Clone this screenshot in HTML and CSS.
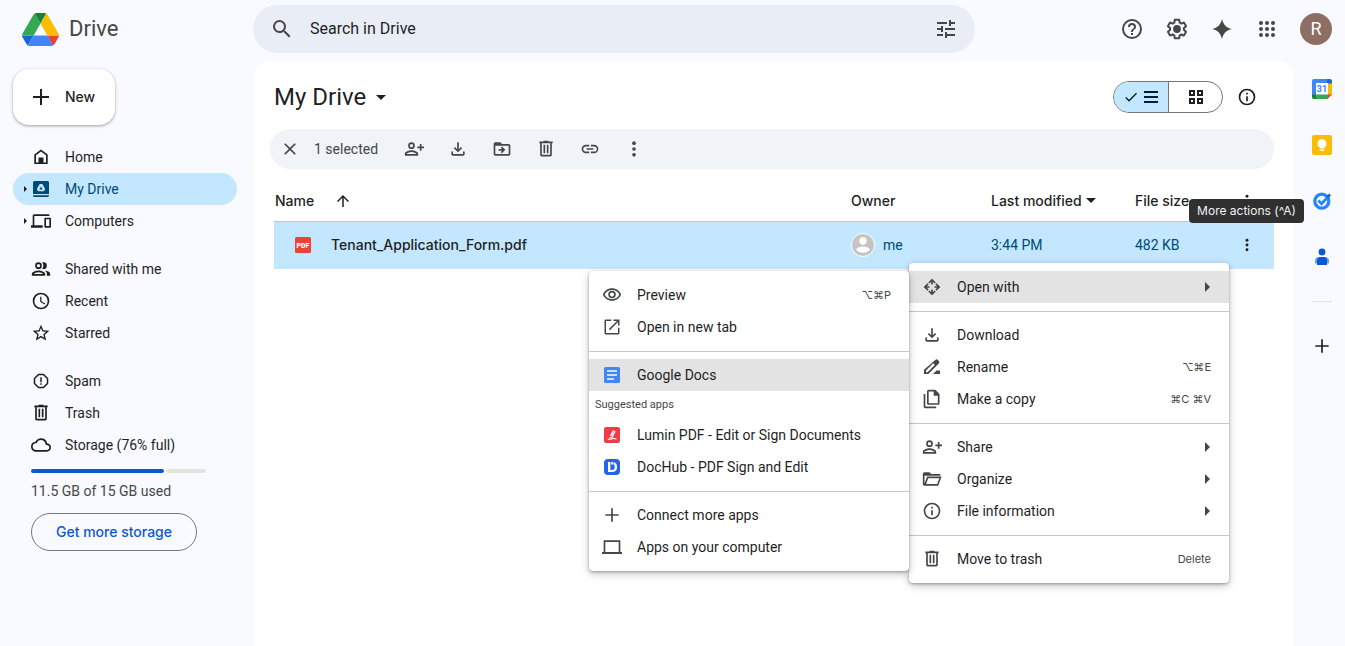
FILE: index.html
```html
<!DOCTYPE html>
<html lang="en">
<head>
<meta charset="utf-8">
<title>My Drive</title>
<link rel="stylesheet" href="styles.css">
</head>
<body>
<svg class="sprite" aria-hidden="true">
  <symbol id="search" viewBox="0 0 24 24"><path d="M15.5 14h-.79l-.28-.27A6.47 6.47 0 0 0 16 9.5 6.5 6.5 0 1 0 9.5 16c1.61 0 3.09-.59 4.23-1.57l.27.28v.79l5 4.99L20.49 19l-4.99-5zm-6 0a4.5 4.5 0 1 1 0-9 4.5 4.5 0 0 1 0 9z"/></symbol>
  <symbol id="tune" viewBox="0 0 24 24"><path d="M3 17v2h6v-2H3zM3 5v2h10V5H3zm10 16v-2h8v-2h-8v-2h-2v6h2zM7 9v2H3v2h4v2h2V9H7zm14 4v-2H11v2h10zm-6-4h2V7h4V5h-4V3h-2v6z"/></symbol>
  <symbol id="help" viewBox="0 0 24 24"><path d="M11 16h2v2h-2zm1-14a10 10 0 1 0 0 20 10 10 0 0 0 0-20zm0 18a8 8 0 1 1 0-16 8 8 0 0 1 0 16zm0-14a4 4 0 0 0-4 4h2a2 2 0 1 1 4 0c0 2-3 1.75-3 5h2c0-2.25 3-2.5 3-5a4 4 0 0 0-4-4z"/></symbol>
  <symbol id="gear" viewBox="0 0 24 24"><path d="M13.85 22.25h-3.7c-.74 0-1.36-.54-1.45-1.27l-.27-1.89c-.27-.14-.53-.29-.79-.46l-1.8.72c-.7.26-1.47-.03-1.81-.65L2.2 15.53c-.35-.66-.2-1.44.36-1.88l1.53-1.19c-.01-.15-.02-.3-.02-.46 0-.15.01-.31.02-.46l-1.52-1.19c-.59-.45-.74-1.26-.37-1.88l1.85-3.19c.34-.62 1.11-.9 1.79-.63l1.81.73c.26-.17.52-.32.78-.46l.27-1.91c.09-.7.71-1.25 1.44-1.25h3.7c.74 0 1.36.54 1.45 1.27l.27 1.89c.27.14.53.29.79.46l1.8-.72c.71-.26 1.48.03 1.82.65l1.84 3.18c.36.66.2 1.44-.36 1.88l-1.52 1.19c.01.15.02.3.02.46s-.01.31-.02.46l1.52 1.19c.56.45.72 1.23.37 1.86l-1.86 3.22c-.34.62-1.11.9-1.8.63l-1.8-.72c-.26.17-.52.32-.78.46l-.27 1.91c-.1.68-.72 1.22-1.46 1.22zm-3.23-2h2.76l.37-2.55.53-.22c.44-.18.88-.44 1.34-.78l.45-.34 2.38.96 1.38-2.4-2.03-1.58.07-.56c.03-.26.06-.51.06-.78s-.03-.53-.06-.78l-.07-.56 2.03-1.58-1.39-2.4-2.39.96-.45-.35c-.42-.32-.87-.58-1.33-.77l-.52-.22-.37-2.55h-2.76l-.37 2.55-.53.21c-.44.19-.88.44-1.34.79l-.45.33-2.38-.95-1.39 2.39 2.03 1.58-.07.56a7 7 0 0 0-.06.79c0 .26.02.53.06.78l.07.56-2.03 1.58 1.38 2.4 2.39-.96.45.35c.43.33.86.58 1.33.77l.53.22.38 2.55z"/><circle cx="12" cy="12" r="3.9"/></symbol>
  <symbol id="spark" viewBox="0 0 24 24"><path d="M12 2c1.300 5.800 4.200 8.700 10 10-5.800 1.300-8.700 4.200-10 10-1.300-5.800-4.200-8.700-10-10 5.800-1.300 8.700-4.200 10-10z"/></symbol>
  <symbol id="dots9" viewBox="0 0 24 24"><circle cx="6" cy="6" r="2"/><circle cx="12" cy="6" r="2"/><circle cx="18" cy="6" r="2"/><circle cx="6" cy="12" r="2"/><circle cx="12" cy="12" r="2"/><circle cx="18" cy="12" r="2"/><circle cx="6" cy="18" r="2"/><circle cx="12" cy="18" r="2"/><circle cx="18" cy="18" r="2"/></symbol>
  <symbol id="plus" viewBox="0 0 24 24"><path d="M20 13h-7v7h-2v-7H4v-2h7V4h2v7h7z"/></symbol>
  <symbol id="home" viewBox="0 0 20 20"><path d="M10 2.400 16.700 7.500V17.100H3.300V7.500zM5 8.300v7.100h10V8.300l-5-3.800z" fill-rule="evenodd"/><path d="M7.500 10.500h5v5.500h-5z"/></symbol>
  <symbol id="mydrive" viewBox="0 0 20 20"><path d="M3.500 2h13A1.500 1.500 0 0 1 18 3.500V15H2V3.500A1.500 1.500 0 0 1 3.500 2zM2 16.200h16v.3a1.500 1.500 0 0 1-1.500 1.500h-13A1.500 1.500 0 0 1 2 16.500z"/><path d="M8.700 5h2.600l2.900 5-1.300 2.300H7.100L5.800 10zM10 7.400l-1.700 3h3.400z" fill="#c2e7ff" fill-rule="evenodd"/></symbol>
  <symbol id="devices" viewBox="0 0 24 24"><path d="M4 6h18V4H4c-1.100 0-2 .9-2 2v11H0v3h14v-3H4V6zm19 2h-6c-.55 0-1 .45-1 1v10c0 .55.45 1 1 1h6c.55 0 1-.45 1-1V9c0-.55-.45-1-1-1zm-1 10h-4v-8h4v8z"/></symbol>
  <symbol id="people" viewBox="0 0 24 24"><path d="M9 13.750c-2.900 0-8 1.400-8 4.250v2h16v-2c0-2.850-5.100-4.250-8-4.250zM3.300 18c.9-1 3.200-2.150 5.700-2.150S13.800 17 14.700 18zM9 12a4 4 0 1 0 0-8 4 4 0 0 0 0 8zm0-6a2 2 0 1 1 0 4 2 2 0 0 1 0-4zm7.500 7.900c1.500 1 2.500 2.300 2.500 4.100v2h4v-2c0-2.300-3.500-3.700-6.500-4.100zM15 12a4 4 0 1 0 0-8c-.6 0-1.100.1-1.600.3a6 6 0 0 1 0 7.400c.5.200 1 .3 1.600.3z"/></symbol>
  <symbol id="clock" viewBox="0 0 24 24"><path d="M12 2a10 10 0 1 0 0 20 10 10 0 0 0 0-20zm0 18a8 8 0 1 1 0-16 8 8 0 0 1 0 16zm.5-13H11v6l5.250 3.150.75-1.230-4.500-2.670z"/></symbol>
  <symbol id="star" viewBox="0 0 24 24"><path d="M22 9.240l-7.190-.62L12 2 9.190 8.630 2 9.240l5.460 4.730L5.820 21 12 17.270 18.180 21l-1.630-7.030L22 9.240zM12 15.400l-3.760 2.270 1-4.280-3.320-2.880 4.380-.38L12 6.100l1.710 4.040 4.380.38-3.320 2.880 1 4.280L12 15.400z"/></symbol>
  <symbol id="spam" viewBox="0 0 24 24"><path d="M8.700 3.300h6.600l5.400 5.400v6.600l-5.400 5.400H8.700l-5.400-5.400V8.700z" fill="none" stroke="currentColor" stroke-width="2" stroke-linejoin="round"/><path d="M11 7h2v6.500h-2zM11 15h2v2h-2z"/></symbol>
  <symbol id="trash" viewBox="0 0 24 24"><path d="M15 3V2H9v1H4v2h1v14c0 1.100.9 2 2 2h10c1.100 0 2-.9 2-2V5h1V3zM7 5h10v14H7zM9 7h2v10H9zM13 7h2v10h-2z"/></symbol>
  <symbol id="cloud" viewBox="0 0 24 24"><path d="M19.350 10.040A7.490 7.490 0 0 0 12 4C9.110 4 6.600 5.640 5.350 8.040A5.994 5.994 0 0 0 0 14c0 3.310 2.690 6 6 6h13c2.760 0 5-2.240 5-5 0-2.640-2.050-4.780-4.650-4.960zM19 18H6c-2.210 0-4-1.790-4-4 0-2.050 1.530-3.760 3.560-3.970l1.070-.11.5-.95A5.469 5.469 0 0 1 12 6c2.620 0 4.880 1.860 5.390 4.430l.3 1.500 1.530.11A2.980 2.980 0 0 1 22 15c0 1.650-1.350 3-3 3z"/></symbol>
  <symbol id="close" viewBox="0 0 24 24"><path d="M19 6.410 17.590 5 12 10.590 6.410 5 5 6.410 10.590 12 5 17.590 6.410 19 12 13.410 17.590 19 19 17.590 13.410 12z"/></symbol>
  <symbol id="addperson" viewBox="0 0 24 24"><path d="M9 13.500c-2.900 0-8 1.400-8 4.250V20h16v-2.250c0-2.850-5.100-4.250-8-4.250zM3.100 18c.7-1 3.200-2.400 5.900-2.400s5.200 1.400 5.900 2.400zM9 12a4 4 0 1 0 0-8 4 4 0 0 0 0 8zm0-6a2 2 0 1 1 0 4 2 2 0 0 1 0-4zM19 9V6h2v3h3v2h-3v3h-2v-3h-3V9z"/></symbol>
  <symbol id="download" viewBox="0 0 24 24"><path d="M4 15h2v3h12v-3h2v3c0 1.100-.9 2-2 2H6c-1.100 0-2-.9-2-2zM17 11l-1.410-1.410L13 12.170V4h-2v8.170L8.410 9.590 7 11l5 5z"/></symbol>
  <symbol id="moveto" viewBox="0 0 24 24"><path d="M20 6h-8l-2-2H4c-1.100 0-2 .9-2 2v12c0 1.100.9 2 2 2h16c1.100 0 2-.9 2-2V8c0-1.100-.9-2-2-2zm0 12H4V8h16zM12.160 12H8v2h4.160l-1.590 1.590L11.990 17 16 13.010 11.990 9l-1.410 1.410z"/></symbol>
  <symbol id="link" viewBox="0 0 24 24"><path d="M3.900 12c0-1.710 1.390-3.100 3.100-3.100h4V7H7a5 5 0 0 0 0 10h4v-1.900H7c-1.710 0-3.100-1.390-3.100-3.100zM8 13h8v-2H8v2zm9-6h-4v1.900h4a3.100 3.100 0 0 1 0 6.200h-4V17h4a5 5 0 0 0 0-10z"/></symbol>
  <symbol id="more" viewBox="0 0 24 24"><circle cx="12" cy="5" r="2.200"/><circle cx="12" cy="12" r="2.200"/><circle cx="12" cy="19" r="2.200"/></symbol>
  <symbol id="up" viewBox="0 0 24 24"><path d="M4 12l1.410 1.410L11 7.830V20h2V7.830l5.580 5.590L20 12l-8-8z"/></symbol>
  <symbol id="check" viewBox="0 0 24 24"><path d="M9 16.170 4.830 12l-1.420 1.410L9 19 21 7l-1.410-1.410z"/></symbol>
  <symbol id="list" viewBox="0 0 18 18"><path d="M2 3h14v2H2zM2 8h14v2H2zM2 13h14v2H2z"/></symbol>
  <symbol id="grid" viewBox="0 0 18 18"><path d="M2 2h6v6H2zm2 2v2h2V4zM10 2h6v6h-6zm2 2v2h2V4zM2 10h6v6H2zm2 2v2h2v-2zM10 10h6v6h-6zm2 2v2h2v-2z" fill-rule="evenodd"/></symbol>
  <symbol id="info" viewBox="0 0 24 24"><path d="M11 7h2v2h-2zm0 4h2v6h-2zm1-9a10 10 0 1 0 0 20 10 10 0 0 0 0-20zm0 18a8 8 0 1 1 0-16 8 8 0 0 1 0 16z"/></symbol>
  <symbol id="eye" viewBox="0 0 24 24"><path d="M12 6a9.770 9.770 0 0 1 8.820 5.500 9.770 9.770 0 0 1-17.640 0A9.770 9.770 0 0 1 12 6m0-2C7 4 2.730 7.110 1 11.500 2.730 15.890 7 19 12 19s9.270-3.110 11-7.500C21.270 7.110 17 4 12 4zm0 5a2.500 2.500 0 1 1 0 5 2.500 2.500 0 0 1 0-5m0-2a4.500 4.500 0 1 0 0 9 4.500 4.500 0 0 0 0-9z"/></symbol>
  <symbol id="newtab" viewBox="0 0 24 24"><path d="M20 20H4V4h7V2H4c-1.110 0-2 .9-2 2v16c0 1.100.89 2 2 2h16c1.100 0 2-.9 2-2v-7h-2zM14 2v2h4.590L7.760 14.830l1.410 1.410L20 5.410V10h2V2z"/></symbol>
  <symbol id="laptop" viewBox="0 0 24 24"><path d="M22 18V4H2v14H0v2.500h24V18zM4 6h16v12H4z"/></symbol>
  <symbol id="openwith" viewBox="0 0 24 24"><path d="M12 2 7.500 6.500l1.400 1.400L11 5.800V9h2V5.800l2.100 2.100 1.400-1.400zM12 22l4.500-4.500-1.400-1.400-2.100 2.100V15h-2v3.200l-2.100-2.100-1.400 1.400zM2 12l4.500 4.500 1.400-1.400L5.800 13H9v-2H5.800l2.100-2.100-1.400-1.400zM22 12l-4.500-4.500-1.400 1.400 2.100 2.100H15v2h3.200l-2.100 2.100 1.400 1.400z"/></symbol>
  <symbol id="rename" viewBox="0 0 20 20"><path d="M13.300 3a1.800 1.800 0 0 1 2.600 0l.9.900a1.800 1.800 0 0 1 0 2.600L6.300 17H2v-4.300zM4 15.200h1.500l7.300-7.300-1.600-1.600L4 13.600zM14.500 13.500H18V17h-7z" fill-rule="evenodd"/></symbol>
  <symbol id="copy" viewBox="0 0 24 24"><path d="M16 1H8C6.900 1 6 1.900 6 3v14c0 1.100.9 2 2 2h11c1.100 0 2-.9 2-2V6zM8 17V3h6v5h5v9zM2 6v15c0 1.100.9 2 2 2h13v-2H4V6z"/></symbol>
  <symbol id="folder" viewBox="0 0 24 24"><path d="M22 6H11L9 4H3c-1.100 0-2 .9-2 2v12c0 1.100.9 2 2 2h16.500l4-11H6.200L3 17.500V8h19zM7.500 11h13.300l-2.500 7H4.900z" fill-rule="evenodd"/></symbol>
  <symbol id="person" viewBox="0 0 24 24"><circle cx="12" cy="12" r="11.500" fill="#c4c4c4" stroke="#fff"/><circle cx="12" cy="8" r="3.700" fill="#fff"/><path d="M5 16.500c1.500-2 4-3 7-3s5.500 1 7 3c-1.500 2-4 3.300-7 3.300s-5.500-1.300-7-3.300z" fill="#fff"/></symbol>
  <symbol id="keep" viewBox="0 0 20 20"><rect width="20" height="20" rx="2" fill="#fbbc04"/><path fill="#fff" d="M10 4.300a4.400 4.400 0 0 0-2.300 8.200v1h4.600v-1A4.400 4.400 0 0 0 10 4.300zM7.700 14.400h4.600v1.500H7.700z"/></symbol>
  <symbol id="tasks" viewBox="0 0 20 20"><circle cx="9.800" cy="10.200" r="7" fill="none" stroke="#2684fc" stroke-width="3.200"/><path d="m6.300 9.500 3.300 3.300 7.400-8" fill="none" stroke="#2684fc" stroke-width="2.800"/><path d="m14.500 5.500 2.700-3 1.800 1.800-2.800 3z" fill="#0d62d6"/></symbol>
  <symbol id="contacts" viewBox="0 0 20 20"><circle cx="10" cy="5" r="3.400" fill="#0b57d0"/><path fill="#669df6" d="M7 10h6a4 4 0 0 1 4 4v2.500H3V14a4 4 0 0 1 4-4z"/><path fill="#0b57d0" d="M9 10h2a4 4 0 0 1 4 4v4H5v-4a4 4 0 0 1 4-4z"/></symbol>
</svg>

<header class="topbar">
  <a class="brand" href="#">
    <svg class="brand-logo" viewBox="0 0 87.3 78" aria-hidden="true">
      <path d="m6.600 66.850 3.850 6.650c.8 1.400 1.950 2.500 3.300 3.300l13.750-23.800h-27.500c0 1.550.4 3.100 1.200 4.500z" fill="#1967d2"/>
      <path d="m43.650 25-13.750-23.800c-1.350.8-2.500 1.900-3.300 3.300l-25.400 44a9.060 9.060 0 0 0-1.200 4.500h27.500z" fill="#34a853"/>
      <path d="m73.550 76.800c1.350-.8 2.500-1.900 3.300-3.300l1.600-2.750 7.650-13.250c.8-1.400 1.200-2.950 1.200-4.500h-27.500l5.850 11.500z" fill="#ea4335"/>
      <path d="m43.650 25 13.750-23.800c-1.350-.8-2.900-1.200-4.500-1.200h-18.500c-1.600 0-3.150.45-4.500 1.200z" fill="#188038"/>
      <path d="m59.800 53h-32.300l-13.750 23.800c1.350.8 2.900 1.200 4.500 1.200h50.800c1.600 0 3.150-.45 4.500-1.200z" fill="#4285f4"/>
      <path d="m73.400 26.500-12.700-22c-.8-1.400-1.950-2.500-3.300-3.300l-13.750 23.800 16.150 28h27.450c0-1.550-.4-3.100-1.200-4.500z" fill="#fbbc04"/>
    </svg>
    <span>Drive</span>
  </a>
  <form class="search" role="search">
    <button class="icon-btn" type="button" aria-label="Search"><svg class="i24"><use href="#search"/></svg></button>
    <input class="search-input" type="text" placeholder="Search in Drive" aria-label="Search in Drive">
    <button class="icon-btn" type="button" aria-label="Advanced search"><svg class="i24"><use href="#tune"/></svg></button>
  </form>
  <div class="top-actions">
    <button class="icon-btn" aria-label="Support"><svg class="i24"><use href="#help"/></svg></button>
    <button class="icon-btn" aria-label="Settings"><svg class="i24"><use href="#gear"/></svg></button>
    <button class="icon-btn" aria-label="Ask Gemini"><svg class="i24"><use href="#spark"/></svg></button>
    <button class="icon-btn" aria-label="Google apps"><svg class="i24"><use href="#dots9"/></svg></button>
    <button class="avatar" aria-label="Account">R</button>
  </div>
</header>

<div class="body">
  <aside class="sidebar">
    <button class="new-btn"><svg class="i24"><use href="#plus"/></svg>New</button>
    <nav class="nav">
      <div class="nav-group">
        <a class="nav-item" href="#"><svg class="i20"><use href="#home"/></svg>Home</a>
        <a class="nav-item expandable selected" href="#"><svg class="i20"><use href="#mydrive"/></svg>My Drive</a>
        <a class="nav-item expandable" href="#"><svg class="i20"><use href="#devices"/></svg>Computers</a>
      </div>
      <div class="nav-group">
        <a class="nav-item" href="#"><svg class="i20"><use href="#people"/></svg>Shared with me</a>
        <a class="nav-item" href="#"><svg class="i20"><use href="#clock"/></svg>Recent</a>
        <a class="nav-item" href="#"><svg class="i20"><use href="#star"/></svg>Starred</a>
      </div>
      <div class="nav-group">
        <a class="nav-item" href="#"><svg class="i20 small"><use href="#spam"/></svg>Spam</a>
        <a class="nav-item" href="#"><svg class="i20"><use href="#trash"/></svg>Trash</a>
        <a class="nav-item" href="#"><svg class="i20"><use href="#cloud"/></svg>Storage (76% full)</a>
      </div>
    </nav>
    <div class="storage">
      <div class="meter"><span class="meter-used" style="width:76%"></span><span class="meter-free"></span></div>
      <p class="storage-text">11.5 GB of 15 GB used</p>
      <button class="storage-btn">Get more storage</button>
    </div>
  </aside>

  <main class="content">
    <div class="title-row">
      <button class="title">My Drive<span class="caret"></span></button>
      <div class="title-actions">
        <div class="view-switch">
          <button class="view on" aria-label="List layout"><svg class="i16"><use href="#check"/></svg><svg class="i18"><use href="#list"/></svg></button>
          <button class="view" aria-label="Grid layout"><svg class="i18"><use href="#grid"/></svg></button>
        </div>
        <button class="icon-btn dark" aria-label="View details"><svg class="i20"><use href="#info"/></svg></button>
      </div>
    </div>

    <div class="toolbar">
      <button class="tool" aria-label="Clear selection"><svg class="i20"><use href="#close"/></svg></button>
      <span class="count">1 selected</span>
      <button class="tool" aria-label="Share"><svg class="i20"><use href="#addperson"/></svg></button>
      <button class="tool" aria-label="Download"><svg class="i20"><use href="#download"/></svg></button>
      <button class="tool" aria-label="Move"><svg class="i20"><use href="#moveto"/></svg></button>
      <button class="tool" aria-label="Move to trash"><svg class="i20"><use href="#trash"/></svg></button>
      <button class="tool" aria-label="Copy link"><svg class="i20"><use href="#link"/></svg></button>
      <button class="tool" aria-label="More actions"><svg class="i20"><use href="#more"/></svg></button>
    </div>

    <table class="files">
      <thead>
        <tr>
          <th class="c-name"><span class="cell name-head">Name<svg class="i18"><use href="#up"/></svg></span></th>
          <th class="c-owner">Owner</th>
          <th class="c-date"><span class="cell">Last modified<span class="caret"></span></span></th>
          <th class="c-size">File size</th>
          <th class="c-more"><button class="more-btn" aria-label="More"><svg class="i16"><use href="#more"/></svg></button></th>
        </tr>
      </thead>
      <tbody>
        <tr>
          <td><span class="cell file-name"><svg class="pdf" viewBox="0 0 16 16" aria-hidden="true"><rect width="16" height="16" rx="1.500" fill="#ea4335"/><text x="8" y="10.500" text-anchor="middle">PDF</text></svg>Tenant_Application_Form.pdf</span></td>
          <td><span class="cell owner"><svg class="i24"><use href="#person"/></svg>me</span></td>
          <td>3:44 PM</td>
          <td>482 KB</td>
          <td class="c-more"><button class="more-btn" aria-label="More actions"><svg class="i16"><use href="#more"/></svg></button></td>
        </tr>
      </tbody>
    </table>

    <div class="tooltip" role="tooltip">More actions (^A)</div>

    <div class="menu context-menu" role="menu">
      <div class="menu-anchor">
        <button class="menu-item active" role="menuitem"><svg class="i20"><use href="#openwith"/></svg><span class="label">Open with</span><span class="arrow"></span></button>
        <div class="menu submenu" role="menu">
          <button class="menu-item" role="menuitem"><svg class="i20"><use href="#eye"/></svg><span class="label">Preview</span><kbd>⌥⌘P</kbd></button>
          <button class="menu-item" role="menuitem"><svg class="i20 small"><use href="#newtab"/></svg><span class="label">Open in new tab</span></button>
          <hr>
          <button class="menu-item active" role="menuitem"><svg class="app" viewBox="0 0 16 16"><rect width="16" height="16" rx="1.500" fill="#4285f4"/><path d="M3 4h10M3 8h10M3 12h7" stroke="#fff" stroke-width="1.600"/></svg><span class="label">Google Docs</span></button>
          <div class="menu-caption">Suggested apps</div>
          <button class="menu-item" role="menuitem"><svg class="app" viewBox="0 0 16 16"><rect width="16" height="16" rx="2" fill="#f23b48"/><path d="M9.800 3.400C8.500 5 7.300 7 6.600 9M11.300 4.300C10 5.800 8.800 8 8.200 10L5 11.500" fill="none" stroke="#fff" stroke-width="1.300"/><path d="M3.800 12.300h3c1.200 0 1.700-.9 2.700-.9.700 0 1 .7 3 .5" fill="none" stroke="#fff" stroke-width="1.100"/></svg><span class="label">Lumin PDF - Edit or Sign Documents</span></button>
          <button class="menu-item" role="menuitem"><svg class="app" viewBox="0 0 16 16"><rect width="16" height="16" rx="4" fill="#2563eb"/><path d="M4 3h2.400v7.900h1.400c2 0 2.900-1 2.900-3 0-1.300-.4-2.100-1.200-2.600V3c2.400.8 3.600 2.500 3.600 5 0 3.200-1.900 5-5.200 5H4z" fill="#fff"/><path d="M7.200 3c.8 0 1.300.1 1.700.2v2.200H7.200z" fill="#fff"/></svg><span class="label">DocHub - PDF Sign and Edit</span></button>
          <hr>
          <button class="menu-item" role="menuitem"><svg class="i20"><use href="#plus"/></svg><span class="label">Connect more apps</span></button>
          <button class="menu-item" role="menuitem"><svg class="i20"><use href="#laptop"/></svg><span class="label">Apps on your computer</span></button>
        </div>
      </div>
      <hr>
      <button class="menu-item" role="menuitem"><svg class="i20"><use href="#download"/></svg><span class="label">Download</span></button>
      <button class="menu-item" role="menuitem"><svg class="i20"><use href="#rename"/></svg><span class="label">Rename</span><kbd>⌥⌘E</kbd></button>
      <button class="menu-item" role="menuitem"><svg class="i20"><use href="#copy"/></svg><span class="label">Make a copy</span><kbd>⌘C ⌘V</kbd></button>
      <hr>
      <button class="menu-item" role="menuitem"><svg class="i20"><use href="#addperson"/></svg><span class="label">Share</span><span class="arrow"></span></button>
      <button class="menu-item" role="menuitem"><svg class="i20"><use href="#folder"/></svg><span class="label">Organize</span><span class="arrow"></span></button>
      <button class="menu-item" role="menuitem"><svg class="i20"><use href="#info"/></svg><span class="label">File information</span><span class="arrow"></span></button>
      <hr>
      <button class="menu-item" role="menuitem"><svg class="i20"><use href="#trash"/></svg><span class="label">Move to trash</span><kbd>Delete</kbd></button>
    </div>
  </main>

  <aside class="rail">
    <button class="rail-btn" aria-label="Calendar">
      <svg class="i20" viewBox="0 0 20 20"><path fill="#4285f4" d="M2 0h13v4H4v12H0V2a2 2 0 0 1 2-2z"/><path fill="#1967d2" d="M15 0h3a2 2 0 0 1 2 2v3h-5z"/><path fill="#fbbc04" d="M15.500 4.500H20V16h-4.500z"/><path fill="#fff" d="M4 4h12v12H4z"/><path fill="#188038" d="M0 15.500h4V20H2a2 2 0 0 1-2-2z"/><path fill="#34a853" d="M4 15.500h12V20H4z"/><path fill="#ea4335" d="M16 15.500h4L15.500 20z"/><text x="10" y="13" text-anchor="middle" class="cal-day">31</text></svg>
    </button>
    <button class="rail-btn" aria-label="Keep"><svg class="i20"><use href="#keep"/></svg></button>
    <button class="rail-btn" aria-label="Tasks"><svg class="i20"><use href="#tasks"/></svg></button>
    <button class="rail-btn" aria-label="Contacts"><svg class="i20"><use href="#contacts"/></svg></button>
    <div class="rail-line"></div>
    <button class="rail-btn dark" aria-label="Get add-ons"><svg class="i20"><use href="#plus"/></svg></button>
  </aside>
</div>
</body>
</html>
```
FILE: styles.css
```css
* { box-sizing: border-box; }

body {
  margin: 0;
  min-height: 100vh;
  display: flex;
  flex-direction: column;
  background: #f9faff;
  color: #1f1f1f;
  font: 14px/20px Roboto, "DejaVu Sans", sans-serif;
}

button, input {
  font: inherit;
  color: inherit;
  border: 0;
  padding: 0;
  background: none;
}

a { color: inherit; text-decoration: none; }
svg { display: block; flex: none; fill: currentColor; }

.sprite { position: absolute; width: 0; height: 0; }
.i16 { width: 16px; height: 16px; }
.i18 { width: 18px; height: 18px; }
.i20 { width: 20px; height: 20px; }
.i24 { width: 24px; height: 24px; }
.i20.small { padding: 1px; }
.cal-day { font: bold 9px Roboto, sans-serif; fill: #4285f4; }

.caret {
  border: 5px solid transparent;
  border-top-color: currentColor;
  border-bottom: 0;
}

.icon-btn {
  display: flex;
  align-items: center;
  justify-content: center;
  color: #444746;
}
.icon-btn.dark { color: #1f1f1f; }

/* Top bar */
.topbar { display: flex; align-items: center; padding: 5px 13px 8px 22px; }
.brand {
  display: flex;
  align-items: center;
  gap: 10px;
  width: 231px;
  font-size: 22px;
  line-height: 28px;
  color: #444746;
}
.brand-logo { width: 37px; height: 33px; }
.search {
  display: flex;
  align-items: center;
  gap: 16px;
  flex: 0 1 722px;
  height: 48px;
  padding: 0 17px;
  border-radius: 24px;
  background: #e9eef6;
}
.search-input { flex: 1; min-width: 0; font-size: 16px; outline: 0; }
.search-input::placeholder { color: #1f1f1f; opacity: 1; }
.top-actions { display: flex; align-items: center; gap: 21px; margin-left: auto; }
.avatar {
  width: 32px;
  height: 32px;
  border-radius: 50%;
  background: #8d6e63;
  color: #fff;
  font-size: 18px;
}

/* Page body */
.body { display: flex; flex: 1; }

.sidebar { width: 254px; padding: 8px 17px 16px 13px; }
.new-btn {
  display: flex;
  align-items: center;
  gap: 12px;
  height: 56px;
  padding: 0 20px 0 16px;
  border-radius: 16px;
  background: #fff;
  box-shadow: 0 1px 2px rgba(60, 64, 67, .3), 0 1px 3px 1px rgba(60, 64, 67, .15);
}
.nav { display: flex; flex-direction: column; gap: 16px; margin-top: 16px; }
.nav-item {
  position: relative;
  display: flex;
  align-items: center;
  gap: 14px;
  height: 32px;
  padding-left: 18px;
  border-radius: 16px;
}
.nav-item.selected { background: #c2e7ff; color: #004a77; }
.expandable::before {
  content: "";
  position: absolute;
  left: 11px;
  border: 3px solid transparent;
  border-left-color: #1f1f1f;
  border-right: 0;
}
.storage { padding: 8px 0 0 18px; }
.meter { display: flex; gap: 2px; width: 175px; height: 4px; }
.meter-used { border-radius: 2px; background: #0b57d0; }
.meter-free { flex: 1; border-radius: 2px; background: #e1e3e1; }
.storage-text { margin: 8px 0 12px; color: #444746; }
.storage-btn {
  height: 38px;
  padding: 0 24px;
  border: 1px solid #747775;
  border-radius: 19px;
  color: #0b57d0;
}
.new-btn, .storage-btn, .files th, .file-name { font-family: Inter, Roboto, sans-serif; font-weight: 500; }

/* Main panel */
.content {
  position: relative;
  flex: 1;
  min-width: 0;
  padding: 0 20px;
  border-radius: 16px 16px 0 0;
  background: #fff;
}
.title-row { display: flex; align-items: center; justify-content: space-between; padding: 16px 0 12px; }
.title { display: flex; align-items: center; gap: 10px; font-size: 24px; line-height: 40px; }
.title-actions { display: flex; align-items: center; gap: 14px; padding-right: 17px; }
.view-switch {
  display: flex;
  height: 32px;
  overflow: hidden;
  border: 1px solid #747775;
  border-radius: 16px;
}
.view { display: flex; align-items: center; justify-content: center; gap: 3px; width: 53px; }
.view.on { width: 55px; border-right: 1px solid #747775; background: #c2e7ff; color: #001d35; }

.toolbar {
  display: flex;
  align-items: center;
  gap: 24px;
  height: 40px;
  margin-left: -4px;
  padding-left: 10px;
  border-radius: 20px;
  background: #f0f4f9;
  color: #444746;
}
.count { width: 66px; margin-left: -10px; }

.files { width: 100%; margin-top: 12px; border-collapse: collapse; table-layout: fixed; }
.files th { height: 40px; padding: 0 0 0 1px; text-align: left; border-bottom: 1px solid #c4c7c5; }
.files td { height: 48px; padding: 0 0 0 1px; background: #c2e7ff; color: #004a77; }
.c-owner { width: 140px; }
.c-date { width: 144px; }
.c-size { width: 85px; }
.c-more { width: 55px; }
.cell { display: flex; align-items: center; }
.name-head { gap: 20px; }
.c-date .cell { gap: 4px; }
.files .file-name { gap: 20px; padding-left: 20px; color: #1f1f1f; }
.pdf { width: 16px; height: 16px; }
.pdf text { font: 900 7px Roboto, sans-serif; fill: #fff; }
.owner { gap: 8px; }
.more-btn { display: flex; justify-content: center; width: 100%; color: #1f1f1f; }

.tooltip {
  position: absolute;
  top: 138px;
  right: -10px;
  z-index: 3;
  padding: 2px 8px;
  border-radius: 4px;
  background: #303030;
  color: #f2f2f2;
  font: 12px/20px Inter, Roboto, sans-serif;
}

/* Menus */
.menu {
  position: absolute;
  width: 320px;
  padding: 8px 0;
  border-radius: 4px;
  background: #fff;
  box-shadow: 0 1px 3px rgba(0, 0, 0, .3), 0 3px 8px rgba(0, 0, 0, .22);
}
.context-menu { top: 202px; right: 65px; z-index: 2; }
.menu-anchor { position: relative; }
.submenu { top: 0; right: 100%; }
.menu-item {
  display: flex;
  align-items: center;
  width: 100%;
  height: 32px;
  padding: 0 18px 0 13px;
  text-align: left;
}
.menu-item svg { color: #444746; margin-right: 15px; }
.menu-item .app { width: 16px; height: 16px; margin: 0 17px 0 2px; }
.menu-item.active { background: #e3e3e3; }
.label { flex: 1; }
.menu kbd { font: 11px/16px Inter, "DejaVu Sans", sans-serif; color: #444746; }
.arrow {
  margin-right: 1px;
  border: 5px solid transparent;
  border-left-color: #444746;
  border-right: 0;
}
.menu hr { margin: 8px 0 7px; border: 0; border-top: 1px solid #c4c7c5; }
.menu-caption { padding: 4px 6px; font-size: 11px; color: #444746; }

/* Add-on rail */
.rail { display: flex; flex-direction: column; align-items: center; width: 51px; padding: 18px 0 0 5px; gap: 36px; }
.rail-line { width: 20px; border-top: 1px solid #e1e3e1; margin: -2px 0; }
```
